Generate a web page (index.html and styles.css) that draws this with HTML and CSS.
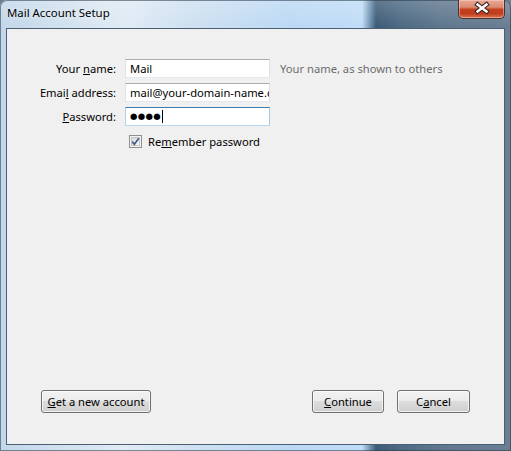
FILE: index.html
```html
<!DOCTYPE html>
<html lang="en">
<head>
<meta charset="utf-8">
<title>Mail Account Setup</title>
<link rel="stylesheet" href="styles.css">
</head>
<body>
<div class="window">
  <div class="titlebar">
    <span class="title">Mail Account Setup</span>
    <button class="close" aria-label="Close">
      <svg width="47" height="19" viewBox="0 0 47 19">
        <path d="M19.5 5.5 L28.5 12.5 M28.5 5.5 L19.5 12.5" stroke="#3a2624" stroke-width="4.6" stroke-linecap="square" fill="none"/>
        <path d="M19.5 5.5 L28.5 12.5 M28.5 5.5 L19.5 12.5" stroke="#ffffff" stroke-width="2.4" stroke-linecap="square" fill="none"/>
      </svg>
    </button>
  </div>
  <div class="client">
    <form class="form">
      <label class="label" for="name">Your <u>n</u>ame:</label>
      <input id="name" class="textbox" type="text" value="Mail">
      <span class="hint">Your name, as shown to others</span>

      <label class="label" for="email">Emai<u>l</u> address:</label>
      <input id="email" class="textbox" type="text" value="mail@your-domain-name.com">
      <span></span>

      <label class="label"><u>P</u>assword:</label>
      <div class="textbox focused"><span class="dots">●●●●</span><span class="caret"></span></div>
      <span></span>

      <label class="check">
        <svg class="checkbox" width="13" height="13" viewBox="0 0 13 13">
          <defs>
            <linearGradient id="cb" x1="0" y1="0" x2="1" y2="1">
              <stop offset="0" stop-color="#d6d6d6"/>
              <stop offset="1" stop-color="#ffffff"/>
            </linearGradient>
          </defs>
          <rect x="0.5" y="0.5" width="12" height="12" fill="#f4f4f4" stroke="#8e8f8f"/>
          <rect x="2.5" y="2.5" width="8" height="8" fill="url(#cb)" stroke="#c4c4c4"/>
          <path d="M3.2 6.6 L5.4 9.3 L9.8 3.2" stroke="#4a5c86" stroke-width="1.7" fill="none"/>
        </svg>
        <span>Re<u>m</u>ember password</span>
      </label>
    </form>
    <div class="actions">
      <button class="btn btn-get" type="button"><u>G</u>et a new account</button>
      <button class="btn btn-continue" type="button"><u>C</u>ontinue</button>
      <button class="btn btn-cancel" type="button">C<u>a</u>ncel</button>
    </div>
  </div>
</div>
</body>
</html>
```
FILE: styles.css
```css
* { box-sizing: border-box; }
html, body { margin: 0; padding: 0; }
body {
  width: 511px;
  height: 451px;
  overflow: hidden;
  font-family: "Noto Sans", "Open Sans", sans-serif;
  font-size: 11.2px;
  color: #000;
  background: #6a7f93;
}
.window {
  height: 451px;
  display: flex;
  flex-direction: column;
  padding: 0 6px 6px 6px;
  border-radius: 7px 7px 0 0;
  box-shadow: inset 0 0 0 1px rgba(40, 55, 70, 0.55);
  background:
    linear-gradient(to bottom, rgba(255,255,255,0.18), rgba(255,255,255,0) 26px),
    linear-gradient(to right,
      #c2d7ea 0px, #d3e2ef 70px, #e0ebf5 125px, #cfe1f1 190px,
      #bcd9f4 290px, #c0ddf7 362px, #6f93b3 370px, #3e5c77 376px,
      #4d6a84 400px, #5f778d 440px, #6b7f93 511px);
}
.titlebar {
  height: 28px;
  display: flex;
  justify-content: space-between;
  align-items: flex-start;
}
.title {
  padding: 5px 0 0 1px;
  line-height: 16px;
  font-size: 11.4px;
  color: #000;
  text-shadow: 0 0 6px rgba(255,255,255,0.8);
}
.close {
  width: 47px;
  height: 19px;
  padding: 0;
  margin: 0;
  border: 1px solid #4a3230;
  border-top: none;
  border-radius: 0 0 5px 5px;
  background: linear-gradient(to bottom, #e9a895 0%, #da8a74 40%, #c5401f 52%, #c13c1c 75%, #dd7452 100%);
  box-shadow: inset 0 0 0 1px rgba(255, 220, 210, 0.45);
  display: block;
}
.close svg { display: block; margin: -1px 0 0 -1px; }
.client {
  flex: 1;
  display: flex;
  flex-direction: column;
  justify-content: space-between;
  border: 1px solid #4b5e72;
  background: #f0f0f0;
}
.form {
  display: grid;
  grid-template-columns: 80px 145px auto;
  grid-auto-rows: 19px;
  row-gap: 5px;
  column-gap: 9px;
  align-items: center;
  padding: 30px 0 0 29px;
  margin: 0;
}
.label {
  justify-self: end;
  white-space: nowrap;
}
.textbox {
  width: 145px;
  height: 19px;
  margin: 0;
  padding: 0 0 0 4px;
  font: inherit;
  color: #000;
  background: #fff;
  border: 1px solid;
  border-color: #abadb3 #dbdfe6 #e3e9ef #e2e3ea;
  outline: none;
  overflow: hidden;
  white-space: nowrap;
}
.textbox.focused {
  display: flex;
  align-items: center;
  border-color: #3d7bad #a4c9e3 #b7d9ed #b5cfe7;
  padding: 0 0 0 4px;
}
.dots {
  font-family: "DejaVu Sans", sans-serif;
  font-size: 8.5px;
  letter-spacing: 0.3px;
  line-height: 1;
}
.caret {
  width: 1px;
  height: 13px;
  background: #000;
  margin-left: 1px;
}
.hint {
  color: #6d6d6d;
  margin-left: 1px;
  white-space: nowrap;
}
.check {
  grid-column: 2 / 4;
  align-self: start;
  margin-top: 4px;
  height: 13px;
  display: flex;
  align-items: center;
  gap: 6px;
  padding-left: 4px;
  white-space: nowrap;
}
.checkbox { display: block; flex: none; }
.actions {
  display: flex;
  gap: 13px;
  padding: 0 34px 31px 34px;
}
.btn {
  height: 23px;
  padding: 0 0 1px 0;
  margin: 0;
  font: inherit;
  color: #000;
  border: 1px solid #707070;
  border-radius: 3px;
  background: linear-gradient(to bottom, #f2f2f2 0%, #ebebeb 50%, #dddddd 50%, #cfcfcf 100%);
  box-shadow: inset 0 0 0 1px rgba(255, 255, 255, 0.7);
}
.btn-get { width: 110px; margin-right: auto; }
.btn-continue { width: 72px; }
.btn-cancel { width: 73px; }
```
